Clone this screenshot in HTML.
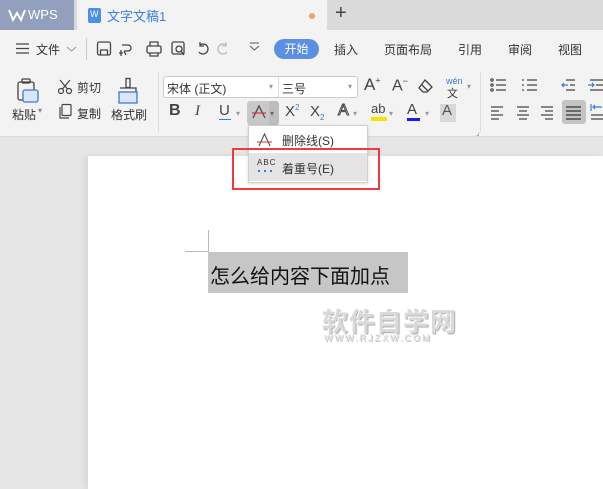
<!DOCTYPE html>
<html><head><meta charset="utf-8"><style>
*{margin:0;padding:0;box-sizing:border-box}
body{width:603px;height:489px;overflow:hidden;position:relative;background:#e6e6e6;font-family:"Liberation Sans","Noto Sans CJK SC",sans-serif;font-size:12px;color:#333}
.a{position:absolute;white-space:nowrap}
svg{position:absolute;overflow:visible}
</style></head><body>
<div class="a" style="left:0;top:0;width:603px;height:30px;background:#dadada"></div>
<div class="a" style="left:0;top:0;width:74px;height:30px;background:#92a0bd"></div>
<svg style="left:8px;top:9px" width="18" height="12"><path d="M1 1 L5 11 L9 4 L13 11 L17 1" fill="none" stroke="#fff" stroke-width="2"/></svg>
<div class="a" style="left:28px;top:7px;color:#fff;font-size:13px">WPS</div>
<div class="a" style="left:77px;top:0;width:250px;height:30px;background:#f3f3f3"></div>
<div class="a" style="left:88px;top:8px;width:13px;height:15px;background:#4a90e8;border-radius:2px"></div>
<div class="a" style="left:90px;top:9px;color:#fff;font-size:9px">W</div>
<div class="a" style="left:107px;top:6px;color:#3b7ee8;font-size:13px">文字文稿1</div>
<div class="a" style="left:309px;top:13px;width:6px;height:6px;border-radius:3px;background:#f0a060"></div>
<div class="a" style="left:335px;top:2px;font-size:20px;color:#444">+</div>
<div class="a" style="left:0;top:30px;width:603px;height:107px;background:#f3f3f3;border-bottom:1px solid #dcdcdc"></div>
<svg style="left:16px;top:43px" width="14" height="11"><path d="M0 1H13M0 5.5H13M0 10H13" stroke="#444" stroke-width="1.2"/></svg>
<div class="a" style="left:36px;top:41px;font-size:12px">文件</div>
<svg style="left:67px;top:47px" width="9" height="5"><path d="M0 0L4.5 4L9 0" fill="none" stroke="#999"/></svg>
<div class="a" style="left:86px;top:38px;width:1px;height:22px;background:#ccc"></div>
<svg style="left:97px;top:41px" width="120" height="16" fill="none" stroke="#444" stroke-width="1.3">
<rect x="0.5" y="1" width="13" height="13" rx="2"/><path d="M3.5 14V9H10.5V14"/>
<path d="M25 4h6a3 3 0 0 1 0 6h-4M27 10l2 4M24 9v6M22 12h4"/>
<rect x="50" y="5" width="14" height="7" rx="1.5"/><path d="M53 5V1h8v4M53 12v3h8v-3"/>
<rect x="75" y="1" width="12" height="12" rx="1.5"/><circle cx="82" cy="8" r="3"/><path d="M84 10l3 4"/>
<path d="M103 4a5 5 0 1 1 -1 7M103 1v4h4"/>
<path stroke="#bbb" d="M129 4a5 5 0 1 0 1 7M129 1v4h-4"/>
</svg>
<svg style="left:250px;top:46px" width="9" height="6"><path d="M0 0L4.5 4L9 0M0 -3H9" fill="none" stroke="#555"/></svg>
<div class="a" style="left:274px;top:39px;width:45px;height:20px;border-radius:10px;background:#5b8fe3;color:#fff;font-size:12px;text-align:center;line-height:20px">开始</div>
<div class="a" style="left:334px;top:41px;font-size:12px">插入</div>
<div class="a" style="left:384px;top:41px;font-size:12px">页面布局</div>
<div class="a" style="left:458px;top:41px;font-size:12px">引用</div>
<div class="a" style="left:508px;top:41px;font-size:12px">审阅</div>
<div class="a" style="left:558px;top:41px;font-size:12px">视图</div>
<svg style="left:16px;top:78px" width="26" height="26" fill="none" stroke="#444" stroke-width="1.3">
<rect x="2" y="4" width="16" height="18" rx="2"/><rect x="6" y="1" width="8" height="4" rx="1"/><rect x="7" y="12" width="15" height="12" rx="2" fill="#dce6f2" stroke="#3a7ad8"/></svg>
<div class="a" style="left:12px;top:106px">粘贴</div><div class="a" style="left:38px;top:106px;font-size:8px;color:#888">▾</div>
<svg style="left:58px;top:80px" width="14" height="14" fill="none" stroke="#444" stroke-width="1.2"><circle cx="3" cy="11" r="2.5"/><circle cx="11" cy="11" r="2.5"/><path d="M4.5 9L12 0M9.5 9L2 0"/></svg>
<div class="a" style="left:77px;top:79px">剪切</div>
<svg style="left:58px;top:104px" width="14" height="15" fill="none" stroke="#444" stroke-width="1.2"><rect x="4" y="0.5" width="9" height="11" rx="1"/><path d="M2 3v11h9"/></svg>
<div class="a" style="left:77px;top:105px">复制</div>
<svg style="left:117px;top:78px" width="22" height="26" fill="none" stroke="#444" stroke-width="1.3"><rect x="9" y="0.5" width="4" height="9"/><path d="M3 10h16v5"/><rect x="2" y="14" width="18" height="11" fill="#dce6f2" stroke="#3a7ad8"/></svg>
<div class="a" style="left:111px;top:106px">格式刷</div>
<div class="a" style="left:158px;top:72px;width:1px;height:60px;background:#ddd"></div>
<div class="a" style="left:163px;top:76px;width:195px;height:22px;background:#fff;border:1px solid #ccc;border-radius:3px"></div>
<div class="a" style="left:278px;top:77px;width:1px;height:20px;background:#ddd"></div>
<div class="a" style="left:167px;top:80px">宋体 (正文)</div>
<div class="a" style="left:269px;top:82px;font-size:8px;color:#999">▾</div>
<div class="a" style="left:282px;top:80px">三号</div>
<div class="a" style="left:348px;top:82px;font-size:8px;color:#999">▾</div>
<div class="a" style="left:364px;top:75px;font-size:17px;color:#444">A<sup style="font-size:9px">+</sup></div>
<div class="a" style="left:392px;top:76px;font-size:16px;color:#444">A<sup style="font-size:9px">−</sup></div>
<svg style="left:418px;top:79px" width="16" height="14" fill="none" stroke="#444" stroke-width="1.3"><path d="M7 1l7 7-5 5H5L1 9z M4 6l6 6"/></svg>
<div class="a" style="left:446px;top:76px;font-size:9px;color:#3a7ad8">wén</div>
<div class="a" style="left:447px;top:85px;font-size:11px">文</div>
<div class="a" style="left:467px;top:82px;font-size:8px;color:#999">▾</div>
<div class="a" style="left:169px;top:102px;font-size:16px;font-weight:bold;color:#444">B</div>
<div class="a" style="left:195px;top:103px;font-size:15px;font-style:italic;font-family:'Liberation Serif',serif;color:#444">I</div>
<div class="a" style="left:219px;top:102px;font-size:15px;color:#444">U</div>
<div class="a" style="left:219px;top:119px;width:12px;height:1px;background:#3a7ad8"></div>
<div class="a" style="left:236px;top:109px;font-size:8px;color:#999">▾</div>
<div class="a" style="left:247px;top:101px;width:32px;height:24px;background:#c8c8c8;border-radius:3px"></div>
<div class="a" style="left:269px;top:101px;width:10px;height:24px;background:#bdbdbd;border-radius:0 3px 3px 0"></div>
<svg style="left:252px;top:105px" width="14" height="14" fill="none" stroke="#444" stroke-width="1.2"><path d="M1 13L7 1L13 13"/><path d="M0 8H14" stroke="#d33"/></svg>
<div class="a" style="left:270px;top:109px;font-size:8px;color:#666">▾</div>
<div class="a" style="left:285px;top:103px;font-size:15px;color:#444">X<sup style="font-size:8px;color:#3a7ad8">2</sup></div>
<div class="a" style="left:310px;top:103px;font-size:15px;color:#444">X<sub style="font-size:8px;color:#3a7ad8">2</sub></div>
<div class="a" style="left:338px;top:102px;font-size:16px;color:#fff;-webkit-text-stroke:1px #444">A</div>
<div class="a" style="left:353px;top:109px;font-size:8px;color:#999">▾</div>
<div class="a" style="left:371px;top:101px;font-size:13px;color:#444">ab</div>
<div class="a" style="left:371px;top:117px;width:16px;height:4px;background:#f2e600"></div>
<div class="a" style="left:389px;top:109px;font-size:8px;color:#999">▾</div>
<div class="a" style="left:407px;top:101px;font-size:15px;color:#444">A</div>
<div class="a" style="left:407px;top:118px;width:13px;height:3px;background:#1a1aee"></div>
<div class="a" style="left:425px;top:109px;font-size:8px;color:#999">▾</div>
<div class="a" style="left:440px;top:104px;width:16px;height:18px;background:#d8d8d8"></div>
<div class="a" style="left:442px;top:102px;font-size:15px;color:#555">A</div>
<div class="a" style="left:476px;top:128px;font-size:8px;color:#888">⌟</div>
<div class="a" style="left:480px;top:72px;width:1px;height:60px;background:#ddd"></div>
<svg style="left:490px;top:78px" width="113" height="44" fill="none" stroke="#444" stroke-width="1.2">
<circle cx="2" cy="2" r="1.2"/><circle cx="2" cy="7" r="1.2"/><circle cx="2" cy="12" r="1.2"/><path d="M6 2h10M6 7h10M6 12h10"/>
<path d="M37 2h10M37 7h10M37 12h10M33 1v2M33 6v2M33 11v2"/>
<path d="M76 2h9M80 7h5M76 12h9"/><path d="M72 7h6M74 5l-2 2 2 2" stroke="#3a7ad8"/>
<path d="M100 2h13M106 7h7M100 12h13"/><path d="M98 7h6M102 5l2 2-2 2" stroke="#3a7ad8"/>
<path d="M1 29h12M1 33h8M1 37h12M1 41h8"/>
<path d="M27 29h12M29 33h8M27 37h12M29 41h8"/>
<path d="M51 29h12M55 33h8M51 37h12M55 41h8"/>
</svg>
<div class="a" style="left:562px;top:100px;width:24px;height:24px;background:#c4c4c4;border-radius:3px"></div>
<svg style="left:565px;top:106px" width="17" height="13" stroke="#333" stroke-width="1.2"><path d="M1 1h15M1 5h15M1 9h15M1 13h15"/></svg>
<svg style="left:590px;top:104px" width="14" height="16" stroke="#3a7ad8" stroke-width="1.2" fill="none"><path d="M1 0v7M3 3h9M5 1l-2 2 2 2"/><path d="M1 11h12M1 15h12" stroke="#444"/></svg>
<div class="a" style="left:88px;top:156px;width:515px;height:333px;background:#fff;box-shadow:-3px 0 6px rgba(0,0,0,.08)"></div>
<div class="a" style="left:208px;top:230px;width:1px;height:22px;background:#bbb"></div>
<div class="a" style="left:185px;top:251px;width:23px;height:1px;background:#bbb"></div>
<div class="a" style="left:208px;top:252px;width:200px;height:41px;background:#c6c6c6"></div>
<div class="a" style="left:210px;top:260px;font-size:20px;color:#111;font-family:'Noto Sans CJK SC','WenQuanYi Zen Hei',sans-serif">怎么给内容下面加点</div>
<div class="a" style="left:322px;top:302px;font-size:26px;font-weight:bold;color:#d9d9d9;text-shadow:-1px -1px 0 #fff,1px 1px 1px #aaa;letter-spacing:1px">软件自学网</div>
<div class="a" style="left:324px;top:333px;font-size:9px;color:#ddd;text-shadow:1px 1px 0 #bbb;letter-spacing:2px">WWW.RJZXW.COM</div>
<div class="a" style="left:248px;top:125px;width:120px;height:58px;background:#fff;border:1px solid #d0d0d0;box-shadow:0 1px 3px rgba(0,0,0,.15)"></div>
<svg style="left:257px;top:133px" width="15" height="14" fill="none" stroke="#444" stroke-width="1"><path d="M2 13L7.5 1L13 13"/><path d="M0 9H15" stroke="#d33"/></svg>
<div class="a" style="left:282px;top:132px">删除线(S)</div>
<div class="a" style="left:249px;top:153px;width:118px;height:28px;background:#e4e4e4"></div>
<div class="a" style="left:257px;top:158px;font-size:8px;color:#333;letter-spacing:1px">ABC</div>
<div class="a" style="left:258px;top:170px;width:15px;height:2px;background:repeating-linear-gradient(90deg,#3a7ad8 0 2px,transparent 2px 6px)"></div>
<div class="a" style="left:282px;top:160px">着重号(E)</div>
<div class="a" style="left:232px;top:148px;width:148px;height:42px;border:2px solid #ef3b3b"></div>
</body></html>
